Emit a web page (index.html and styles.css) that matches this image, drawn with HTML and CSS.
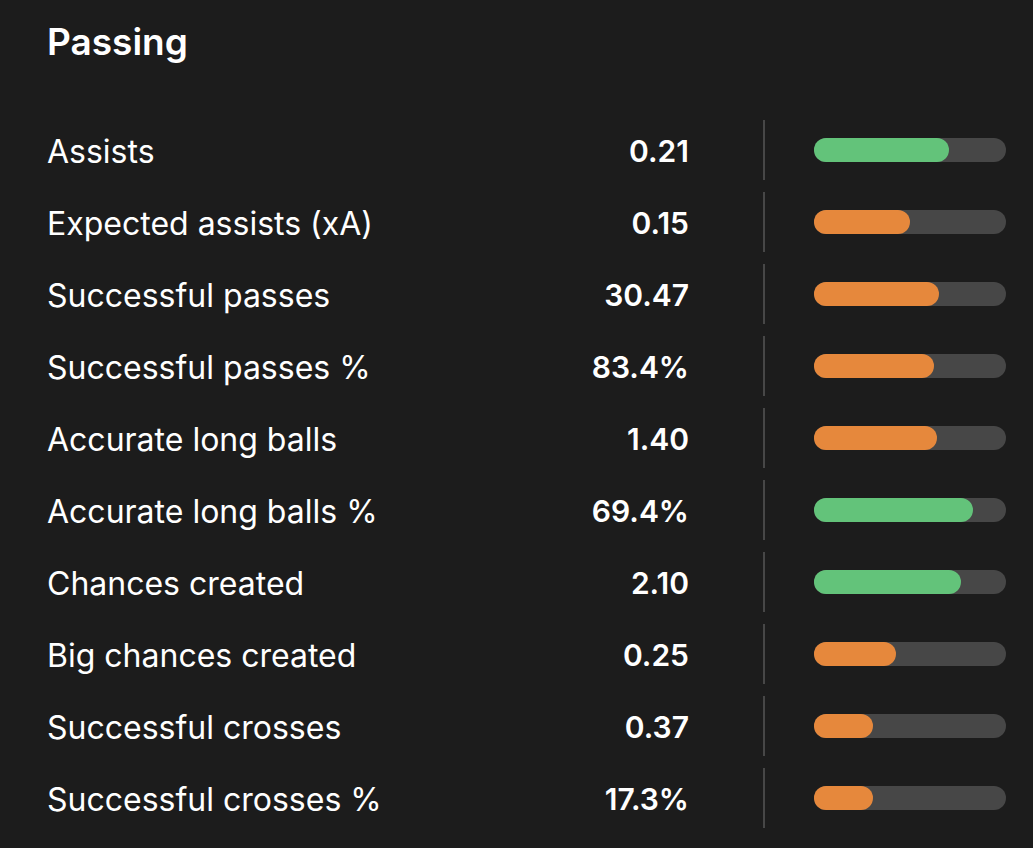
FILE: index.html
```html
<!DOCTYPE html>
<html>
<head>
<meta charset="utf-8">
<link rel="stylesheet" href="styles.css">
</head>
<body>
<div class="card">
  <h1 class="title">Passing</h1>
  <div class="rows">
    <div class="row"><span class="label">Assists</span><span class="value">0.21</span><span class="divider"></span><span class="track"><span class="fill green" style="width:135px"></span></span></div>
    <div class="row"><span class="label">Expected assists (xA)</span><span class="value">0.15</span><span class="divider"></span><span class="track"><span class="fill orange" style="width:96px"></span></span></div>
    <div class="row"><span class="label">Successful passes</span><span class="value">30.47</span><span class="divider"></span><span class="track"><span class="fill orange" style="width:125px"></span></span></div>
    <div class="row"><span class="label">Successful passes %</span><span class="value">83.4%</span><span class="divider"></span><span class="track"><span class="fill orange" style="width:120px"></span></span></div>
    <div class="row"><span class="label">Accurate long balls</span><span class="value">1.40</span><span class="divider"></span><span class="track"><span class="fill orange" style="width:123px"></span></span></div>
    <div class="row"><span class="label">Accurate long balls %</span><span class="value">69.4%</span><span class="divider"></span><span class="track"><span class="fill green" style="width:159px"></span></span></div>
    <div class="row"><span class="label">Chances created</span><span class="value">2.10</span><span class="divider"></span><span class="track"><span class="fill green" style="width:147px"></span></span></div>
    <div class="row"><span class="label">Big chances created</span><span class="value">0.25</span><span class="divider"></span><span class="track"><span class="fill orange" style="width:82px"></span></span></div>
    <div class="row"><span class="label">Successful crosses</span><span class="value">0.37</span><span class="divider"></span><span class="track"><span class="fill orange" style="width:59px"></span></span></div>
    <div class="row"><span class="label">Successful crosses %</span><span class="value">17.3%</span><span class="divider"></span><span class="track"><span class="fill orange" style="width:59px"></span></span></div>
  </div>
</div>
</body>
</html>
```
FILE: styles.css
```css
html, body {
  margin: 0;
  padding: 0;
  background: #1c1c1c;
}
body {
  width: 1033px;
  height: 848px;
  overflow: hidden;
  font-family: "Inter", "Noto Sans", sans-serif;
  color: #ffffff;
}
.card {
  padding: 18px 27px 0 47px;
}
.title {
  margin: 0 0 48px 0;
  font-size: 37px;
  line-height: 48px;
  font-weight: 600;
}
.rows {
  display: flex;
  flex-direction: column;
}
.row {
  display: flex;
  align-items: center;
  height: 72px;
}
.label {
  flex: 1;
  font-size: 32px;
  font-weight: 400;
  padding-top: 2px;
}
.value {
  font-size: 30px;
  font-weight: 600;
  text-align: right;
  padding-top: 2px;
}
.divider {
  width: 2px;
  height: 60px;
  margin-left: 74px;
  background: #474747;
  align-self: center;
}
.track {
  margin-left: 49px;
  width: 192px;
  height: 24px;
  border-radius: 12px;
  background: #474747;
  display: flex;
}
.fill {
  height: 24px;
  border-radius: 12px;
}
.green { background: #63c37a; }
.orange { background: #e6883c; }
```
